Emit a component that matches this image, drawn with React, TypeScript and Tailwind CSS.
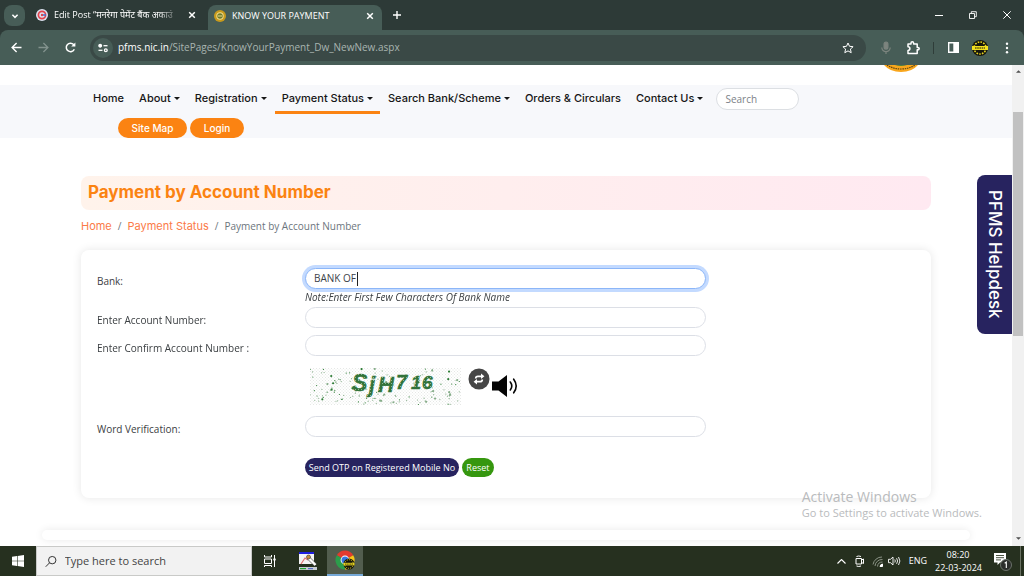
import { useEffect, useRef } from "react";
import type { ReactNode } from "react";

const ui = "font-['Open_Sans','Noto_Sans',sans-serif]";
const display = "font-['Inter','Open_Sans',sans-serif]";

function CloseIcon() {
  return (
    <svg className="size-2" viewBox="0 0 8 8" fill="none" stroke="currentColor" strokeWidth="1.5">
      <path d="M1.2 1.2l5.6 5.6M6.8 1.2L1.2 6.8" />
    </svg>
  );
}

function TabStrip() {
  return (
    <div className="flex h-[30px] shrink-0 items-end bg-[#2d3a37] text-[9px] text-white">
      <button aria-label="Search tabs" className="mb-1 ml-1 flex size-[21px] items-center justify-center rounded-lg bg-[#475d57]">
        <svg className="size-2" viewBox="0 0 8 8" fill="none" stroke="currentColor" strokeWidth="1.5">
          <path d="M1.4 2.8L4 5.4l2.6-2.6" />
        </svg>
      </button>
      <div className="ml-[11px] flex h-[30px] w-[160px] items-center">
        <svg className="size-3 shrink-0" viewBox="0 0 12 12">
          <circle cx="6" cy="6" r="6" fill="#dde3f1" />
          <circle cx="6" cy="6" r="3.6" fill="none" stroke="#e2434c" strokeWidth="1.7" />
          <path d="M6 6h4" stroke="#3c6fd1" strokeWidth="1.5" />
          <circle cx="6" cy="6" r="1.2" fill="#e2434c" />
        </svg>
        <span className="ml-1.5 w-[126px] shrink-0 whitespace-nowrap [mask-image:linear-gradient(to_right,black_82%,transparent)]">
          Edit Post “मनरेगा पेमेंट बैंक अकाउं
        </span>
        <button aria-label="Close tab" className="ml-2"><CloseIcon /></button>
      </div>
      <div className="ml-3 flex h-[25px] w-[174px] items-center rounded-t-lg bg-[#475d57] pr-2 pb-1 pl-1.5">
        <svg className="size-3 shrink-0" viewBox="0 0 12 12">
          <circle cx="6" cy="6" r="6" fill="#c79a1c" />
          <circle cx="6" cy="6" r="3.7" fill="#f2dc8a" />
          <circle cx="6" cy="6" r="2.7" fill="#6b7a2c" />
          <path d="M4 6h4" stroke="#f2dc8a" />
        </svg>
        <span className="ml-1.5 flex-1 whitespace-nowrap">KNOW YOUR PAYMENT</span>
        <button aria-label="Close tab"><CloseIcon /></button>
      </div>
      <button aria-label="New tab" className="mb-[11px] ml-[11px]">
        <svg className="size-2" viewBox="0 0 8 8" fill="none" stroke="currentColor" strokeWidth="1.4">
          <path d="M4 0v8M0 4h8" />
        </svg>
      </button>
      <div className="mr-[13px] mb-[11px] ml-auto flex items-center gap-[26px]">
        <button aria-label="Minimize">
          <svg className="size-2" viewBox="0 0 8 8" stroke="currentColor"><path d="M0 4.5h8" /></svg>
        </button>
        <button aria-label="Restore">
          <svg className="size-2" viewBox="0 0 8 8" fill="none" stroke="currentColor" strokeWidth=".9">
            <path d="M.5 2.5h5v5h-5zM2.3 2.5V.7h5v5H5.5" />
          </svg>
        </button>
        <button aria-label="Close window">
          <svg className="size-2" viewBox="0 0 8 8" stroke="currentColor"><path d="M.3 .3l7.4 7.4M7.7 .3L.3 7.7" /></svg>
        </button>
      </div>
    </div>
  );
}

function ProfileBadge() {
  return (
    <svg className="size-4" viewBox="0 0 16 16">
      <circle cx="8" cy="8" r="8" fill="#15150c" />
      <circle cx="8" cy="8" r="6" fill="none" stroke="#e8d51e" strokeWidth="1.6" strokeDasharray="1.6 1.2" />
      <path d="M0 6h16v4H0z" fill="#f3e01f" />
      <path d="M3 8h10" stroke="#15150c" strokeWidth="1.2" strokeDasharray="1.6 .6" />
    </svg>
  );
}

function Toolbar() {
  return (
    <div className="flex h-[35px] shrink-0 items-center rounded-t-lg bg-[#475d57] text-white">
      <button aria-label="Back" className="ml-[11px]">
        <svg className="size-[11px]" viewBox="0 0 11 11" fill="none" stroke="currentColor" strokeWidth="1.4">
          <path d="M10.5 5.5H1.3M5.6 1L1.1 5.5 5.6 10" />
        </svg>
      </button>
      <button aria-label="Forward" className="ml-4 text-[#82928d]">
        <svg className="size-[11px]" viewBox="0 0 11 11" fill="none" stroke="currentColor" strokeWidth="1.3">
          <path d="M.5 5.5h9.2M5.4 1l4.5 4.5L5.4 10" />
        </svg>
      </button>
      <button aria-label="Reload" className="ml-4">
        <svg className="size-[11px]" viewBox="0 0 11 11" fill="none" stroke="currentColor" strokeWidth="1.5">
          <path d="M9.3 7.2A4.2 4.2 0 1 1 8.6 2.6L9.6 3.8" />
          <path d="M10.4 .4v4.2H6.2z" fill="currentColor" stroke="none" />
        </svg>
      </button>
      <div className="ml-3.5 flex h-[26px] flex-1 items-center rounded-full bg-[#3a4946] pr-3 pl-[3px]">
        <button aria-label="Site information" className="flex size-5 items-center justify-center rounded-full bg-[#475d57]">
          <svg className="size-2.5" viewBox="0 0 10 10" fill="none" stroke="currentColor" strokeWidth="1.3">
            <circle cx="2.2" cy="2.7" r="1.3" fill="currentColor" /><path d="M5.5 2.7h4" />
            <circle cx="7.8" cy="7.3" r="1.4" /><path d="M.5 7.3h4" />
          </svg>
        </button>
        <span className="ml-[5px] flex-1 text-[10px] text-[#a9b5b1]">
          <span className="text-white">pfms.nic.in</span>/SitePages/KnowYourPayment_Dw_NewNew.aspx
        </span>
        <button aria-label="Bookmark">
          <svg className="size-3" viewBox="0 0 12 12" fill="none" stroke="currentColor">
            <path d="M6 1l1.5 3.300 3.600.4-2.700 2.400.8 3.600L6 8.900l-3.200 1.800.8-3.600L.9 4.700l3.600-.4z" />
          </svg>
        </button>
      </div>
      <button aria-label="Microphone" className="ml-[13px] text-[#7c847e]">
        <svg className="size-3.5" viewBox="0 0 14 14" fill="none" stroke="currentColor" strokeWidth="1.2">
          <rect x="5.1" y="1" width="3.800" height="7.200" rx="1.900" fill="currentColor" />
          <path d="M2.800 6.500a4.200 4.200 0 0 0 8.400 0M7 10.800V13" />
        </svg>
      </button>
      <button aria-label="Extensions" className="ml-3">
        <svg className="size-4" viewBox="0 0 16 16" fill="none" stroke="currentColor" strokeWidth="1.500" strokeLinejoin="round">
          <path d="M3 4h3V3a1.200 1.200 0 0 1 2.600 0v1h3.600v3.400h.8a1.100 1.100 0 0 1 0 2.400h-.8v3.700H3v-3a1.900 1.900 0 0 0 0-3.800z" />
        </svg>
      </button>
      <span className="ml-3 h-3 w-px bg-[#2f3d39]" />
      <button aria-label="Side panel" className="ml-[13px]">
        <svg className="size-[13px]" viewBox="0 0 13 13" fill="none" stroke="currentColor" strokeWidth="1.4">
          <path d="M1.700 1.700h9.600v9.600H1.700z" /><path d="M7 1.700h4.300v9.600H7z" fill="currentColor" />
        </svg>
      </button>
      <button aria-label="Profile" className="ml-3"><ProfileBadge /></button>
      <button aria-label="Menu" className="mr-[15px] ml-[17px]">
        <svg className="h-3 w-1" viewBox="0 0 4 12" fill="currentColor">
          <circle cx="2" cy="1.700" r="1.200" /><circle cx="2" cy="6" r="1.200" /><circle cx="2" cy="10.300" r="1.200" />
        </svg>
      </button>
    </div>
  );
}

const navItems = [
  { label: "Home", menu: false, active: false },
  { label: "About", menu: true, active: false },
  { label: "Registration", menu: true, active: false },
  { label: "Payment Status", menu: true, active: true },
  { label: "Search Bank/Scheme", menu: true, active: false },
  { label: "Orders & Circulars", menu: false, active: false },
  { label: "Contact Us", menu: true, active: false },
];

function SiteHeader() {
  return (
    <header>
      <div className="flex h-5 justify-end pr-[94px]">
        <svg className="h-[7px] w-[34px]" viewBox="0 0 34 7">
          <path d="M0 0h34Q28 7 17 7T0 0z" fill="#f9a61c" />
          <path d="M3 0q6 4 14 4t14-4" fill="none" stroke="#5e4715" strokeWidth="1.2" strokeDasharray="1.500 .8" />
          <path d="M11 0h12q-6 2-12 0z" fill="#4d7d3b" />
        </svg>
      </div>
      <div className={`h-[53px] bg-[#f7f8fb] pl-[86px] ${display}`}>
        <div className="flex items-start">
          <nav className="flex gap-px">
            {navItems.map((item) => (
              <a
                key={item.label}
                href="#"
                className={`flex h-[29px] items-center gap-[3px] border-b-3 px-[7px] text-[11px] font-medium whitespace-nowrap text-[#161616] ${
                  item.active ? "border-[#fb8312]" : "border-transparent"
                }`}
              >
                {item.label}
                {item.menu && (
                  <svg className="h-[3px] w-[6px]" viewBox="0 0 6 3"><path d="M0 0h6L3 3z" fill="currentColor" /></svg>
                )}
              </a>
            ))}
          </nav>
          <input
            type="text"
            aria-label="Search"
            placeholder="Search"
            className={`mt-[3px] ml-1.5 h-[22px] w-[83px] rounded-full border border-[#dcdfe3] bg-white px-2 text-[10px] placeholder:text-[#7b8187] ${ui}`}
          />
        </div>
        <div className="mt-1 ml-8 flex gap-[3px] text-[10px] font-medium text-white">
          <a href="#" className="flex h-5 w-[69px] items-center justify-center rounded-full bg-[#fb8312]">Site Map</a>
          <a href="#" className="flex h-5 w-[54px] items-center justify-center rounded-full bg-[#fb8312]">Login</a>
        </div>
      </div>
    </header>
  );
}

const noise = (n: number) => {
  const v = Math.sin(n * 12.9898) * 43758.5453;
  return v - Math.floor(v);
};

const specks = Array.from({ length: 150 }, (_, i) => ({
  x: noise(i + 1) * 150,
  y: noise(i + 301) * 37,
  r: i % 5 === 0 ? 1.1 : 0.6,
}));

function Captcha() {
  return (
    <svg className="h-[37px] w-[151px]" viewBox="0 0 151 37" role="img" aria-label="Verification code">
      <defs>
        <pattern id="dots" width="3" height="3" patternUnits="userSpaceOnUse">
          <rect width="3" height="3" fill="#fff" />
          <path d="M0 0h1v1H0zM1.500 1.500h1v1h-1z" fill="#e6e8e6" />
        </pattern>
        <pattern id="ink" width="3" height="3" patternUnits="userSpaceOnUse">
          <rect width="3" height="3" fill="#32733a" />
          <path d="M0 0h1v1H0z" fill="#8fb492" />
        </pattern>
      </defs>
      <rect width="151" height="37" fill="url(#dots)" />
      {specks.map((s, i) => (
        <circle key={i} cx={s.x} cy={s.y} r={s.r} fill={i % 3 === 0 ? "#2f7d37" : "#86ad89"} />
      ))}
      <g fill="url(#ink)" stroke="url(#ink)" strokeWidth=".5" fontFamily="Liberation Sans, sans-serif" fontWeight="700" fontStyle="italic">
        <text x="42" y="23" fontSize="23">S</text>
        <text x="59" y="24" fontSize="22">j</text>
        <text x="68" y="24" fontSize="22">H</text>
        <text x="86" y="21" fontSize="20">7</text>
        <text x="101" y="21" fontSize="18">1</text>
        <text x="112" y="21" fontSize="19">6</text>
      </g>
    </svg>
  );
}

const field =
  "h-[21px] w-full rounded-full border border-[#dcdfe6] bg-white px-2 text-[10px] text-[#3c4248] outline-none";

function Row({ id, label, className, children }: { id: string; label: string; className: string; children: ReactNode }) {
  return (
    <div className={`grid grid-cols-[208px_minmax(0,401px)] items-start ${className}`}>
      <label htmlFor={id} className="pt-1.5 leading-[15px]">{label}</label>
      <div>{children}</div>
    </div>
  );
}

function PaymentForm() {
  const bankRef = useRef<HTMLInputElement>(null);
  useEffect(() => bankRef.current?.focus(), []);
  return (
    <form className="mt-4 rounded-lg bg-white px-4 pt-[18px] pb-[21px] text-[10px] text-[#3c4043] shadow-[0_0_10px_rgba(0,0,0,0.10)]">
      <Row id="bank" label="Bank:" className="h-[39px]">
        <div className="flex h-[21px] items-center rounded-full border border-[#8cb6f8] bg-white ring-3 ring-[#c3daff]">
          <input ref={bankRef} id="bank" defaultValue="BANK OF" className="field-sizing-content ml-2 bg-transparent text-[10px] text-[#3c4248] caret-transparent outline-none" />
          <span className="ml-px h-3.5 w-px bg-[#222]" />
        </div>
        <p className="mt-px leading-[15px] italic">Note:Enter First Few Characters Of Bank Name</p>
      </Row>
      <Row id="account" label="Enter Account Number:" className="h-7">
        <input id="account" type="text" className={field} />
      </Row>
      <Row id="confirm" label="Enter Confirm Account Number :" className="h-7">
        <input id="confirm" type="text" className={field} />
      </Row>
      <div className="ml-[213px] flex h-[53px] items-start pt-[5px]">
        <Captcha />
        <button type="button" aria-label="Refresh code" className="ml-[7px]">
          <svg className="size-[22px]" viewBox="0 0 22 22">
            <circle cx="11" cy="11" r="10.5" fill="#464646" />
            <g fill="none" stroke="#fff" strokeWidth="1.700">
              <path d="M14.800 8.300H10Q7.700 8.300 7.700 10.600" />
              <path d="M7.200 13.700H12Q14.300 13.700 14.300 11.400" />
            </g>
            <path d="M13 5.600l3.400 2.700L13 11zM9 11l-3.400 2.700L9 16.400z" fill="#fff" />
          </svg>
        </button>
        <button type="button" aria-label="Play code" className="mt-1.5 ml-0.5">
          <svg className="h-6 w-[26px]" viewBox="0 0 26 24">
            <path d="M0 7.500h6.500L15 1v22l-8.500-6.500H0z" fill="#050505" />
            <g fill="none" stroke="#050505" strokeWidth="1.600" strokeLinecap="round">
              <path d="M18.300 8q3 4 0 8M21.700 5.200q5 6.800 0 13.600" />
            </g>
          </svg>
        </button>
      </div>
      <Row id="word" label="Word Verification:" className="h-[42px]">
        <input id="word" type="text" className={field} />
      </Row>
      <div className="ml-[208px] flex gap-[3px] text-[9px] whitespace-nowrap text-white">
        <button type="button" className="h-[19px] w-[154px] rounded-full bg-[#27235f]">
          Send OTP on Registered Mobile No
        </button>
        <button type="reset" className="h-[19px] w-8 rounded-full bg-[#36970f]">Reset</button>
      </div>
    </form>
  );
}

function Page() {
  return (
    <div className="relative flex min-h-0 flex-1 bg-white">
      <div className="min-w-0 flex-1 overflow-hidden">
        <SiteHeader />
        <main className="mx-auto mt-[38px] w-[84%]">
          <h1 className={`flex h-[34px] items-center rounded-lg bg-linear-to-r from-[#fff3eb] to-[#ffe9f1] px-[7px] text-[17px] font-bold text-[#fb8312] ${display}`}>
            Payment by Account Number
          </h1>
          <nav aria-label="Breadcrumb" className="mt-2 flex items-center gap-1.5 text-[10px] leading-4 text-[#6c757d]">
            <a href="#" className={`text-[11px] text-[#fb7a48] ${display}`}>Home</a>
            <span>/</span>
            <a href="#" className={`text-[11px] text-[#fb7a48] ${display}`}>Payment Status</a>
            <span>/</span>
            <span>Payment by Account Number</span>
          </nav>
          <PaymentForm />
        </main>
        <div className="mx-[42px] mt-8 h-2.5 rounded-full bg-white shadow-[0_0_8px_rgba(0,0,0,0.09)]" />
      </div>
      <div className="flex w-3 shrink-0 flex-col items-center bg-[#f1f1f1] text-[#505050]">
        <svg className="mt-[5px] h-[3px] w-[5px]" viewBox="0 0 6 3"><path d="M0 3h6L3 0z" fill="currentColor" /></svg>
        <div className="mt-[39px] h-[224px] w-2.5 bg-[#c1c1c1]" />
        <svg className="mt-auto mb-1.5 h-[3px] w-[5px]" viewBox="0 0 6 3"><path d="M0 0h6L3 3z" fill="currentColor" /></svg>
      </div>
      <a
        href="#"
        className={`absolute top-[110px] right-3 flex h-[159px] w-[35px] items-center justify-center rounded-l-lg bg-[#27235f] text-[17px] font-medium whitespace-nowrap text-white [writing-mode:vertical-rl] ${display}`}
      >
        PFMS Helpdesk
      </a>
      <div className="absolute right-[42px] bottom-[25px] whitespace-nowrap text-[#b9bbbd]">
        <p className="text-sm leading-[17px]">Activate Windows</p>
        <p className="text-[11px] leading-4">Go to Settings to activate Windows.</p>
      </div>
    </div>
  );
}

function Taskbar() {
  return (
    <footer className="flex h-[30px] shrink-0 items-center bg-[#26301f] text-[10px] text-white">
      <button aria-label="Start" className="flex w-9 justify-center">
        <svg className="size-3" viewBox="0 0 12 12" fill="currentColor">
          <path d="M0 1.700l5-.7v4.700H0zM5.600.9L12 0v5.700H5.600zM0 6.300h5V11l-5-.7zM5.600 6.300H12V12l-6.400-.9z" />
        </svg>
      </button>
      <label className="flex h-full w-[216px] items-center border border-[#c9cac8] bg-[#f2f2f2] pl-2 text-[#444]">
        <svg className="size-[13px]" viewBox="0 0 13 13" fill="none" stroke="#333" strokeWidth="1.1">
          <circle cx="8" cy="5" r="4.1" /><path d="M5 8L.8 12.3" />
        </svg>
        <input
          type="text"
          aria-label="Type here to search"
          placeholder="Type here to search"
          className="ml-2 w-full bg-transparent text-[11px] outline-none placeholder:text-[#444]"
        />
      </label>
      <button aria-label="Task view" className="ml-3">
        <svg className="size-3" viewBox="0 0 12 12" fill="none" stroke="currentColor">
          <path d="M.5 0v2h7V0M.5 4h7v4.500h-7zM.5 12v-1.500h7V12M10.500 0v12" /><path d="M9.300 3.600h2.400v1.800H9.300z" fill="currentColor" stroke="none" />
        </svg>
      </button>
      <button aria-label="Paint tool" className="ml-[23px]">
        <svg className="size-[18px]" viewBox="0 0 18 18">
          <path d="M0 0h15v12H0z" fill="#f4f4f4" /><path d="M0 0h15v2H0z" fill="#1d1de0" />
          <path d="M2 12l4-6 3 2" fill="none" stroke="#e27070" strokeWidth="1.200" />
          <path d="M9.500 6l7 7" stroke="#555" strokeWidth="3.400" /><path d="M9.500 6l7 7" stroke="#fff" strokeWidth="2.400" />
          <circle cx="9.500" cy="5" r="2" fill="#c98b3c" stroke="#333" strokeWidth=".6" />
          <path d="M0 15h18v3H0z" fill="#c7ccd4" /><path d="M1 16h6v1.200H1z" fill="#26a633" /><path d="M9 16h5v1.200H9z" fill="#5670c6" />
        </svg>
      </button>
      <button aria-label="Chrome" className="ml-[10px] flex h-full w-9 items-center justify-center border-b-2 border-[#76a9d8] bg-[#525d4e]">
        <svg className="size-5" viewBox="0 0 20 20">
          <path d="M10 10L1.800 5.200A9.400 9.400 0 0 1 18.200 5.200z" fill="#e33b2e" />
          <path d="M10 10L1.800 5.200A9.400 9.400 0 0 0 10 19.400z" fill="#2c9d4b" />
          <path d="M10 10L18.200 5.200A9.400 9.400 0 0 1 10 19.400z" fill="#f6c519" />
          <circle cx="10" cy="10" r="4.400" fill="#fff" /><circle cx="10" cy="10" r="3.500" fill="#3777e0" />
          <circle cx="14" cy="14" r="5.500" fill="#15150c" />
          <path d="M8.500 12.800h11v2.600h-11z" fill="#e8d51e" />
          <path d="M10 14.100h8" stroke="#15150c" strokeWidth=".8" strokeDasharray="1.200 .5" />
          <circle cx="14" cy="14" r="4.300" fill="none" stroke="#e8d51e" strokeWidth=".9" strokeDasharray="1.200 1" />
        </svg>
      </button>
      <div className="ml-auto flex items-center">
        <svg className="h-[5px] w-[9px]" viewBox="0 0 9 5" fill="none" stroke="currentColor" strokeWidth="1.100"><path d="M.5 4.500l4-4 4 4" /></svg>
        <svg className="ml-2 size-3" viewBox="0 0 12 12" fill="none" stroke="currentColor">
          <path d="M2 3.500h5.500v5.500H2zM7.500 5l2-1v4.500l-2-1M2.500 1.500q2.200-1 4.500 0M2.500 11q2.200 1 4.500 0" />
        </svg>
        <svg className="ml-1.5 size-3" viewBox="0 0 12 12" fill="none" stroke="#8b9386">
          <path d="M1 9.500A9 9 0 0 1 10 2M3 11A7 7 0 0 1 10.500 4.500M5.500 11.500A5 5 0 0 1 10.500 7" /><path d="M8 11.500a3 3 0 0 1 2.500-2.500v2.500z" fill="#fff" stroke="#fff" />
        </svg>
        <svg className="ml-1 h-3 w-[13px]" viewBox="0 0 13 12" fill="none" stroke="currentColor" strokeWidth=".9">
          <path d="M.5 4.300h2L5 2v8L2.500 7.700h-2zM6.800 4.500q1 1.500 0 3M8.600 3.200q2 2.800 0 5.600M10.500 2q2.800 4 0 8" />
        </svg>
        <span className="ml-2 text-[9px]">ENG</span>
        <div className="ml-2 w-[46px] text-center text-[9px] leading-[13px] whitespace-nowrap"><p>08:20</p><p>22-03-2024</p></div>
        <button aria-label="Notifications" className="mr-2 ml-3">
          <svg className="size-[19px]" viewBox="0 0 19 19">
            <path d="M1 1h12v9.500H7L4.500 13v-2.500H1z" fill="#fff" />
            <path d="M3 3.500h8M3 5.700h8M3 7.900h5" stroke="#39432f" strokeWidth=".9" />
            <circle cx="13" cy="13" r="5.500" fill="#2b2d2b" stroke="#6b716a" />
            <path d="M11.700 11.200L13.300 10v6" fill="none" stroke="#fff" strokeWidth="1.100" />
          </svg>
        </button>
        <span className="mr-[3px] h-[30px] w-px bg-[#6a7263]" />
      </div>
    </footer>
  );
}

export default function App() {
  return (
    <div className={`flex h-screen flex-col overflow-hidden bg-white ${ui}`}>
      <TabStrip />
      <div className="bg-[#2d3a37]">
        <Toolbar />
      </div>
      <Page />
      <Taskbar />
    </div>
  );
}
